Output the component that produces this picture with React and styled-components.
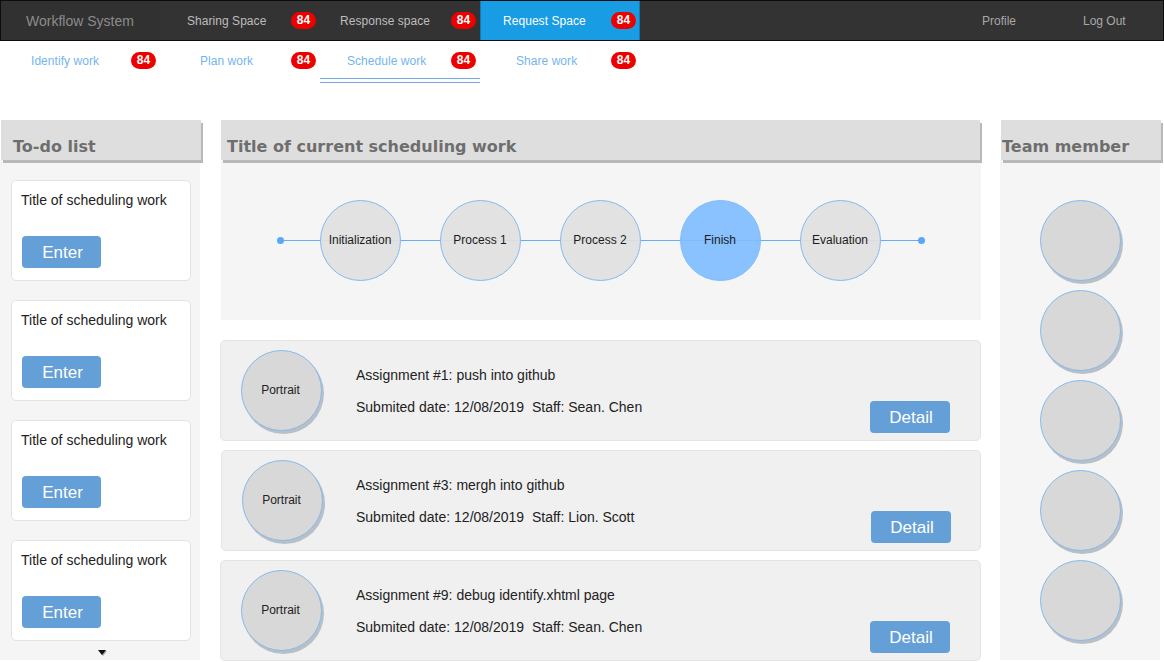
import React from 'react';
import styled, {createGlobalStyle} from 'styled-components';

const GlobalStyle = createGlobalStyle`
    html, body {
        margin: 0;
        padding: 0;
        background: #fff;
        font-family: 'Liberation Sans', Arial, sans-serif;
    }
`

const Page = styled.div`
    width: 1164px;
    height: 662px;
    overflow: hidden;
`

const TopBar = styled.div`
    display: flex;
    align-items: stretch;
    height: 41px;
    box-sizing: border-box;
    background: #333;
    border: 1px solid #0c0c0c;
`

const Brand = styled.div`
    width: 159px;
    padding-left: 25px;
    box-sizing: border-box;
    line-height: 41px;
    font-size: 14px;
    color: #8c8c8c;
    background: #313131;
`

const TopTab = styled.div`
    display: flex;
    align-items: center;
    width: 160px;
    height: 39px;
    box-sizing: border-box;
    padding-left: ${p => p.$indent}px;
    font-size: 12px;
    letter-spacing: 0.05px;
    color: ${p => p.$active ? '#fff' : '#bdbdbd'};
    background: ${p => p.$active ? '#189ce4' : 'transparent'};
    box-shadow: ${p => p.$active ? 'inset 1px 0 0 #127ab4, inset -1px 0 0 #127ab4' : 'none'};
`

const TabLabel = styled.span`
    flex: 1;
`

const Badge = styled.span`
    flex: none;
    width: 25px;
    height: 17px;
    margin-right: 4px;
    border-radius: 9px;
    background: #ee0000;
    color: #fff;
    font-size: 12px;
    font-weight: bold;
    line-height: 17px;
    text-align: center;
`

const TopLink = styled.div`
    width: ${p => p.$width}px;
    line-height: 40px;
    font-size: 12px;
    color: #a8a8a8;
`

const TopSpacer = styled.div`
    flex: 1;
`

const SubBar = styled.div`
    display: flex;
    height: 79px;
`

const SubTab = styled.div`
    position: relative;
    display: flex;
    align-items: center;
    width: 160px;
    height: 39px;
    box-sizing: border-box;
    padding-left: ${p => p.$indent}px;
    font-size: 12px;
    letter-spacing: 0.05px;
    color: #75b4f0;

    ${p => p.$active && `
        &::after {
            content: '';
            position: absolute;
            left: 0;
            right: 0;
            top: 37px;
            height: 3px;
            border-top: 1px solid #76a8e0;
            border-bottom: 1px solid #76a8e0;
        }
    `}
`

const Columns = styled.div`
    display: flex;
    align-items: flex-start;
    gap: 20px;
`

const Column = styled.div`
    width: ${p => p.$width}px;
    flex: none;
`

const PanelHeader = styled.div`
    position: relative;
    z-index: 1;
    width: ${p => p.$width}px;
    height: 40px;
    margin-left: 1px;
    box-sizing: border-box;
    padding-left: ${p => p.$indent}px;
    padding-top: 16px;
    background: #dedede;
    box-shadow: 2px 3px 0 #b8b8b8;
    font-family: 'DejaVu Sans', Verdana, sans-serif;
    font-size: 16px;
    font-weight: bold;
    line-height: 22px;
    color: #6e6e6e;
    white-space: nowrap;
`

const TodoBody = styled.div`
    position: relative;
    display: flex;
    flex-direction: column;
    gap: 20px;
    height: 500px;
    box-sizing: border-box;
    padding: 20px 9px 0 11px;
    background: #f5f5f5;
`

const TodoCard = styled.div`
    flex: none;
    height: 101px;
    box-sizing: border-box;
    margin-bottom: -1px;
    padding: 11px 9px;
    background: #fff;
    border: 1px solid #e2e2e2;
    border-radius: 5px;
    font-size: 14px;
    line-height: 17px;
    color: #222;
`

const ActionButton = styled.div`
    width: 80px;
    height: 32px;
    box-sizing: border-box;
    padding-left: 2px;
    border-radius: 4px;
    background: #659fd7;
    color: #fff;
    font-size: 17px;
    line-height: 34px;
    text-align: center;
`

const EnterButton = styled(ActionButton)`
    width: 79px;
    margin: 27px 0 0 1px;
`

const MoreArrow = styled.svg`
    position: absolute;
    left: 96px;
    bottom: 3px;
`

const TimelinePanel = styled.div`
    position: relative;
    display: flex;
    gap: 40px;
    width: 760px;
    height: 160px;
    box-sizing: border-box;
    margin-left: 1px;
    padding: 40px 0 0 99px;
    background: #f5f5f5;
`

const Track = styled.div`
    position: absolute;
    left: 59px;
    top: 80px;
    width: 642px;
    height: 1px;
    background: #66aef5;

    &::before, &::after {
        content: '';
        position: absolute;
        top: -3px;
        width: 7px;
        height: 7px;
        border-radius: 50%;
        background: #57a8fa;
    }
    &::before { left: -3px; }
    &::after { right: -3px; }
`

const Step = styled.div`
    position: relative;
    width: 81px;
    height: 81px;
    flex: none;
    margin-right: -1px;
    box-sizing: border-box;
    padding-right: 1px;
    border: 1px solid ${p => p.$current ? '#80bcff' : '#86b9ec'};
    border-radius: 50%;
    background: ${p => p.$current ? 'rgba(128,188,255,0.92)' : 'rgba(224,224,224,0.92)'};
    font-size: 12px;
    line-height: 79px;
    text-align: center;
    color: #1c1c1c;
`

const Assignments = styled.div`
    display: flex;
    flex-direction: column;
    gap: 9px;
    margin-top: 20px;
`

const AssignmentCard = styled.div`
    display: flex;
    width: ${p => 761 - p.$shift}px;
    height: 101px;
    box-sizing: border-box;
    margin-left: ${p => p.$shift}px;
    padding: 9px ${p => 30 - p.$shift}px 0 20px;
    background: #f0f0f0;
    border: 1px solid #e4e4e4;
    border-radius: 5px;
`

const Portrait = styled.div`
    flex: none;
    width: 81px;
    height: 81px;
    box-sizing: border-box;
    padding-right: 2px;
    border: 1px solid #86b9ec;
    border-radius: 50%;
    background: #d8d8d8;
    box-shadow: 2px 3px 0 #b9bfc6;
    font-size: 12px;
    line-height: 79px;
    text-align: center;
    color: #222;
`

const AssignmentText = styled.div`
    flex: 1;
    padding: 17px 0 0 ${p => 34 - p.$shift}px;
    font-size: 14px;
    line-height: 17px;
    color: #222;
`

const AssignmentLine = styled.div`
    margin-bottom: 15px;
    white-space: pre;
`

const DetailButton = styled(ActionButton)`
    align-self: flex-start;
    margin-top: 51px;
`

const MemberBody = styled.div`
    display: flex;
    flex-direction: column;
    align-items: center;
    gap: 9px;
    height: 500px;
    box-sizing: border-box;
    padding-top: 40px;
    background: #f5f5f5;
`

const Member = styled.div`
    width: 81px;
    height: 81px;
    flex: none;
    box-sizing: border-box;
    border: 1px solid #86b9ec;
    border-radius: 50%;
    background: #d8d8d8;
    box-shadow: 2px 3px 0 #b9bfc6;
`

const todos = [1, 2, 3, 4];
const steps = ['Initialization', 'Process 1', 'Process 2', 'Finish', 'Evaluation'];
const assignments = [
    {title: 'Assignment #1: push into github', staff: 'Sean. Chen', shift: 0},
    {title: 'Assignment #3: mergh into github', staff: 'Lion. Scott', shift: 1},
    {title: 'Assignment #9: debug identify.xhtml page', staff: 'Sean. Chen', shift: 0},
];

const App = () => {
    return (
        <Page>
            <GlobalStyle />
            <TopBar>
                <Brand>Workflow System</Brand>
                <TopTab $indent={27}><TabLabel>Sharing Space</TabLabel><Badge>84</Badge></TopTab>
                <TopTab $indent={20}><TabLabel>Response space</TabLabel><Badge>84</Badge></TopTab>
                <TopTab $indent={23} $active><TabLabel>Request Space</TabLabel><Badge>84</Badge></TopTab>
                <TopSpacer />
                <TopLink $width={101}>Profile</TopLink>
                <TopLink $width={80}>Log Out</TopLink>
            </TopBar>
            <SubBar>
                <SubTab $indent={31}><TabLabel>Identify work</TabLabel><Badge>84</Badge></SubTab>
                <SubTab $indent={40}><TabLabel>Plan work</TabLabel><Badge>84</Badge></SubTab>
                <SubTab $indent={27} $active><TabLabel>Schedule work</TabLabel><Badge>84</Badge></SubTab>
                <SubTab $indent={36}><TabLabel>Share work</TabLabel><Badge>84</Badge></SubTab>
            </SubBar>
            <Columns>
                <Column $width={200}>
                    <PanelHeader $width={200} $indent={12}>To-do list</PanelHeader>
                    <TodoBody>
                        {todos.map(n => (
                            <TodoCard key={n}>
                                Title of scheduling work
                                <EnterButton>Enter</EnterButton>
                            </TodoCard>
                        ))}
                        <MoreArrow width="12" height="8" viewBox="0 0 12 8">
                            <path d="M3 2h8L7 7z" fill="#aaa" />
                            <path d="M2 1h8L6 6z" fill="#111" />
                        </MoreArrow>
                    </TodoBody>
                </Column>
                <Column $width={760}>
                    <PanelHeader $width={759} $indent={6}>Title of current scheduling work</PanelHeader>
                    <TimelinePanel>
                        <Track />
                        {steps.map(s => <Step key={s} $current={s === 'Finish'}>{s}</Step>)}
                    </TimelinePanel>
                    <Assignments>
                        {assignments.map(a => (
                            <AssignmentCard key={a.title} $shift={a.shift}>
                                <Portrait>Portrait</Portrait>
                                <AssignmentText $shift={a.shift}>
                                    <AssignmentLine>{a.title}</AssignmentLine>
                                    <AssignmentLine>{'Submited date: 12/08/2019  Staff: ' + a.staff}</AssignmentLine>
                                </AssignmentText>
                                <DetailButton>Detail</DetailButton>
                            </AssignmentCard>
                        ))}
                    </Assignments>
                </Column>
                <Column $width={160}>
                    <PanelHeader $width={160} $indent={1}>Team member</PanelHeader>
                    <MemberBody>
                        {[1, 2, 3, 4, 5].map(n => <Member key={n} />)}
                    </MemberBody>
                </Column>
            </Columns>
        </Page>
    );
}

export default App;
